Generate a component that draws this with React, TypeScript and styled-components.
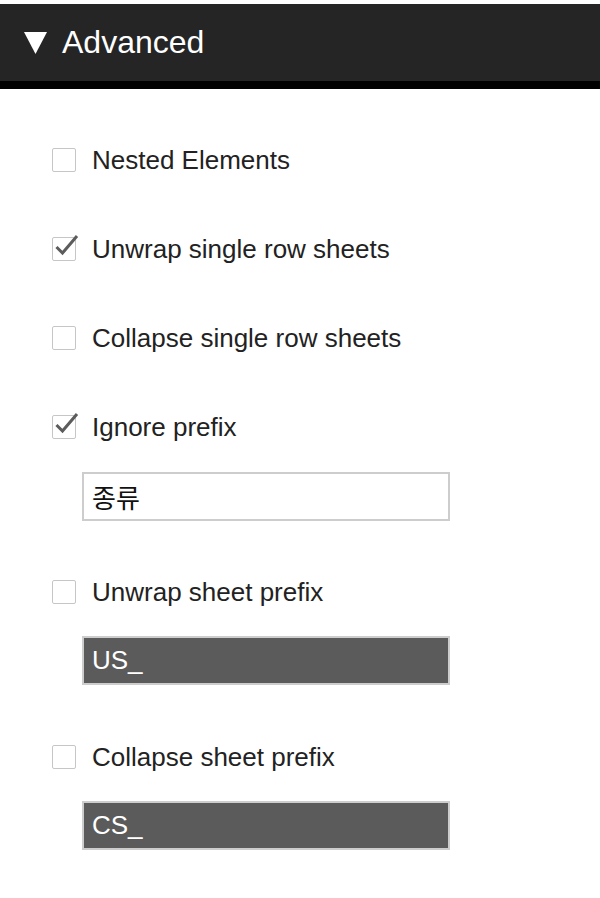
import styled, { createGlobalStyle } from 'styled-components';

const GlobalStyle = createGlobalStyle`
  body {
    margin: 0;
    background: #fff;
    font-family: "Liberation Sans", Arial, sans-serif;
  }
`;

const Header = styled.div`
  margin-top: 4px;
  height: 77px;
  background: #252525;
  border-bottom: 8px solid #000;
  display: flex;
  align-items: center;
  padding-left: 24px;
  color: #fff;
  font-size: 32px;
  gap: 15px;
`;

const Content = styled.div`
  padding: 56px 0 0 52px;
  display: flex;
  flex-direction: column;
`;

const Block = styled.div<{ $gap: number }>`
  display: flex;
  flex-direction: column;
  margin-bottom: ${p => p.$gap}px;
`;

const Row = styled.label`
  display: flex;
  align-items: center;
  height: 30px;
  gap: 16px;
  font-size: 26px;
  color: #222;
`;

const Box = styled.span`
  position: relative;
  width: 22px;
  height: 22px;
  border: 1.5px solid #c6c6c6;
  border-radius: 2px;
  flex-shrink: 0;

  svg {
    position: absolute;
    left: 1px;
    top: -5px;
  }
`;

const TextInput = styled.input<{ $dark?: boolean }>`
  margin: ${p => p.$dark ? 29 : 30}px 0 0 30px;
  width: 368px;
  height: 49px;
  box-sizing: border-box;
  border: 2px solid #cdcdcd;
  background: ${p => (p.$dark ? '#5b5b5b' : '#fff')};
  color: ${p => (p.$dark ? '#fff' : '#111')};
  font-family: "Liberation Sans", "Noto Sans CJK KR", sans-serif;
  font-size: 26px;
  padding: 0 8px;
  outline: none;
`;

const Arrow = () => (
  <svg width="23" height="22" viewBox="0 0 23 22">
    <path d="M0 0 H23 L11.5 22 Z" fill="#fff" />
  </svg>
);

const Check = () => (
  <svg width="26" height="24" viewBox="0 0 26 24">
    <path d="M2.5 14 L8.5 20 L23 3" fill="none" stroke="#5c5c5c" strokeWidth="3" />
  </svg>
);

const Option = ({ label, checked }: { label: string; checked?: boolean }) => (
  <Row>
    <Box>{checked && <Check />}</Box>
    {label}
  </Row>
);

export default function App() {
  return (
    <>
      <GlobalStyle />
      <Header>
        <Arrow />
        <span>Advanced</span>
      </Header>
      <Content>
        <Block $gap={59}>
          <Option label="Nested Elements" />
        </Block>
        <Block $gap={59}>
          <Option label="Unwrap single row sheets" checked />
        </Block>
        <Block $gap={59}>
          <Option label="Collapse single row sheets" />
        </Block>
        <Block $gap={56}>
          <Option label="Ignore prefix" checked />
          <TextInput defaultValue="종류" />
        </Block>
        <Block $gap={57}>
          <Option label="Unwrap sheet prefix" />
          <TextInput $dark defaultValue="US_" />
        </Block>
        <Block $gap={0}>
          <Option label="Collapse sheet prefix" />
          <TextInput $dark defaultValue="CS_" />
        </Block>
      </Content>
    </>
  );
}
